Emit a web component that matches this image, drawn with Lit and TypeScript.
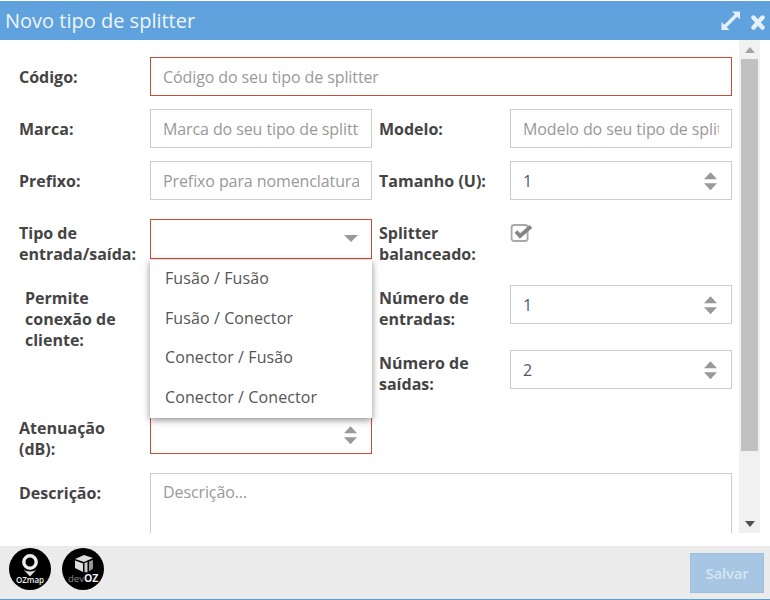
import { LitElement, html, css } from "lit";
import { customElement } from "lit/decorators.js";

const spinner = html`<svg class="spin" width="13" height="20" viewBox="0 0 14 20">
  <path d="M0 8 7 0.5 14 8Z" fill="#999"/><path d="M0 12.5 7 20 14 12.5Z" fill="#999"/></svg>`;

@customElement("app-root")
export class AppRoot extends LitElement {
  static styles = css`
    :host { display: block; width: 770px; height: 600px; font-family: "Open Sans", sans-serif; color: #444; background: #fff; overflow: hidden; }
    * { box-sizing: border-box; }
    .modal { height: 600px; display: flex; flex-direction: column; padding-top: 1px; border-bottom: 1px solid #5f9fd6; }
    .head { height: 39px; flex: none; background: #5fa2dd; display: flex; align-items: center; padding: 0 5px 0 5px; color: #eef5fb; }
    .title { font-size: 20px; flex: 1; }
    .head svg { display: block; }
    .expand { margin-right: 11px; }
    .close { margin-top: 3px; }
    .body { flex: 1; min-height: 0; display: flex; align-items: flex-start; padding-right: 10px; }
    .scroll { flex: 1; height: 493px; overflow: hidden; padding: 17px 7px 0 18px; }
    .bar { width: 21px; height: 493px; flex: none; background: #f1f1f1; display: flex; flex-direction: column; align-items: center; }
    .arrow { height: 19px; flex: none; display: flex; align-items: center; justify-content: center; }
    .thumb { width: 17px; height: 392px; background: #c1c1c1; flex: none; }
    .gap { flex: 1; }
    .row { display: grid; grid-template-columns: 132px 222px 138px 222px; }
    .row > .rl { margin-left: 7px; }
    .row > label:first-child { padding-left: 1px; }
    .full { grid-template-columns: 132px 582px; }
    .m13 { margin-top: 13px; }
    .m19 { margin-top: 19px; }
    .m20 { margin-top: 20px; }
    label { font-size: 16px; font-weight: 700; line-height: 21px; padding-top: 10px; color: #444; display: block; }
    .tall { padding-top: 4px; }
    .low { padding-top: 3px; }
    .indent { padding-left: 7px; padding-top: 3px; }
    .field { position: relative; height: 39px; }
    .field input, .box, textarea { display: block; width: 100%; height: 39px; border: 1px solid #ccc; background: #fff; padding: 0 12px; font: 16px "Open Sans", sans-serif; color: #557; outline: none; border-radius: 0; }
    input::placeholder, textarea::placeholder { color: #999; opacity: 1; letter-spacing: -0.1px; }
    .err input, .err .box { border-color: #cc4b37; }
    .spin { position: absolute; right: 15px; top: 10px; }
    .h40, .h40 .box { height: 40px; }
    .caret { position: absolute; right: 14px; top: 16px; width: 0; height: 0; border: 7px solid transparent; border-top: 7px solid #999; border-bottom: 0; }
    .menu { position: absolute; left: 0; right: 0; top: 41px; height: 158px; background: #fff; z-index: 5; box-shadow: 0 2px 7px rgba(0,0,0,.45); }
    .opt { height: 39.5px; line-height: 37px; padding-left: 15px; font-size: 16px; letter-spacing: 0.1px; color: #555; }
    .check { display: block; margin-top: 4px; }
    .block { display: grid; grid-template-columns: 132px 222px 360px; }
    .stack { display: flex; flex-direction: column; row-gap: 20px; }
    .sub { display: grid; grid-template-columns: 131px 222px; margin-left: 7px; }
    .desc { height: 120px; padding-top: 7px; resize: none; }
    .val { color: #5b7fa6; }
    .val2 { color: #666; }
    .foot { height: 53px; flex: none; background: #ebebeb; display: flex; align-items: center; padding: 0 6px 0 9px; }
    .logos { display: flex; gap: 11px; flex: 1; align-self: flex-start; margin-top: 2px; }
    .logo { width: 42px; height: 42px; display: block; }
    button { width: 74px; height: 40px; background: #a6c6e3; border: 1px solid #9cc0e0; color: #d7e5f1; font: 600 15px "Open Sans", sans-serif; letter-spacing: -0.2px; padding: 0; margin-top: 1px; }
  `;

  render() {
    return html`<div class="modal">
      <div class="head">
        <div class="title">Novo tipo de splitter</div>
        <svg class="expand" width="19" height="19" viewBox="0 0 19 19" fill="#e6f0f9">
          <path d="M11 0.5H19V8.5L16.2 5.7 5.7 16.2 8.5 19H0.5V11L3.3 13.8 13.8 3.3Z"/>
        </svg>
        <svg class="close" width="14" height="15" viewBox="0 0 14 15" stroke="#e6f0f9" stroke-width="4.4" stroke-linecap="round">
          <path d="M2.5 2.5 11.5 12.5M11.5 2.5 2.5 12.5"/>
        </svg>
      </div>
      <div class="body">
        <div class="scroll">
          <div class="row full">
            <label>Código:</label>
            <div class="field err"><input placeholder="Código do seu tipo de splitter"></div>
          </div>
          <div class="row m13">
            <label>Marca:</label>
            <div class="field"><input placeholder="Marca do seu tipo de splitter"></div>
            <label class="rl">Modelo:</label>
            <div class="field"><input placeholder="Modelo do seu tipo de splitter"></div>
          </div>
          <div class="row m13">
            <label>Prefixo:</label>
            <div class="field"><input placeholder="Prefixo para nomenclatura"></div>
            <label class="rl">Tamanho (U):</label>
            <div class="field"><input class="val" value="1">${spinner}</div>
          </div>
          <div class="row m19">
            <label class="tall">Tipo de entrada/saída:</label>
            <div class="field err h40">
              <div class="box"></div><span class="caret"></span>
              <div class="menu">
                <div class="opt">Fusão / Fusão</div>
                <div class="opt">Fusão / Conector</div>
                <div class="opt">Conector / Fusão</div>
                <div class="opt">Conector / Conector</div>
              </div>
            </div>
            <label class="rl tall">Splitter balanceado:</label>
            <svg class="check" width="23" height="20" viewBox="0 0 23 20" fill="none">
              <rect x="1.6" y="2" width="16" height="16" rx="2.5" stroke="#a8a8a8" stroke-width="1.8"/>
              <path d="M6 8.5 10 13 21 3.5" stroke="#858585" stroke-width="3.8"/>
            </svg>
          </div>
          <div class="block m20">
            <label class="indent">Permite conexão de cliente:</label>
            <div></div>
            <div class="stack">
              <div class="sub">
                <label class="low">Número de entradas:</label>
                <div class="field"><input class="val" value="1">${spinner}</div>
              </div>
              <div class="sub">
                <label class="low">Número de saídas:</label>
                <div class="field"><input class="val2" value="2">${spinner}</div>
              </div>
            </div>
          </div>
          <div class="row m20">
            <label class="low">Atenuação<br>(dB):</label>
            <div class="field err"><input>${spinner}</div>
          </div>
          <div class="row full m13">
            <label>Descrição:</label>
            <div class="field"><textarea class="desc" placeholder="Descrição..."></textarea></div>
          </div>
        </div>
        <div class="bar">
          <div class="arrow"><svg width="10" height="6" viewBox="0 0 10 6"><path d="M0 6 5 0 10 6Z" fill="#a3a3a3"/></svg></div>
          <div class="thumb"></div>
          <div class="gap"></div>
          <div class="arrow"><svg width="10" height="6" viewBox="0 0 10 6"><path d="M0 0H10L5 6Z" fill="#505050"/></svg></div>
        </div>
      </div>
      <div class="foot">
        <div class="logos">
          <svg class="logo" viewBox="0 0 42 42">
            <circle cx="21" cy="21" r="21" fill="#000"/>
            <circle cx="21" cy="14" r="6.2" fill="#000" stroke="#eee" stroke-width="3.4"/>
            <path d="M14.5 21.5C17 24 25 24 27.5 21.5L21 28.5Z" fill="#ddd"/>
            <text x="21" y="35" text-anchor="middle" font-size="8" font-weight="600" fill="#eee" font-family="Open Sans, sans-serif">OZmap</text>
          </svg>
          <svg class="logo" viewBox="0 0 42 42">
            <circle cx="21" cy="21" r="21" fill="#000"/>
            <path d="M13 11 22 7 31 10 22 14Z" fill="#ddd"/>
            <path d="M13 12.5 21 15.5V24L13 20Z" fill="#ddd"/>
            <path d="M22.5 15 25.5 14V24.5L22.5 24Z" fill="#ccc"/>
            <path d="M27 13.5 31 12V20.5L27 23.5Z" fill="#999"/>
            <text x="6" y="34" font-size="9.5" fill="#8c8c8c" font-family="Open Sans, sans-serif">dev<tspan font-size="10.5" font-weight="700" fill="#eee">OZ</tspan></text>
          </svg>
        </div>
        <button>Salvar</button>
      </div>
    </div>`;
  }
}
